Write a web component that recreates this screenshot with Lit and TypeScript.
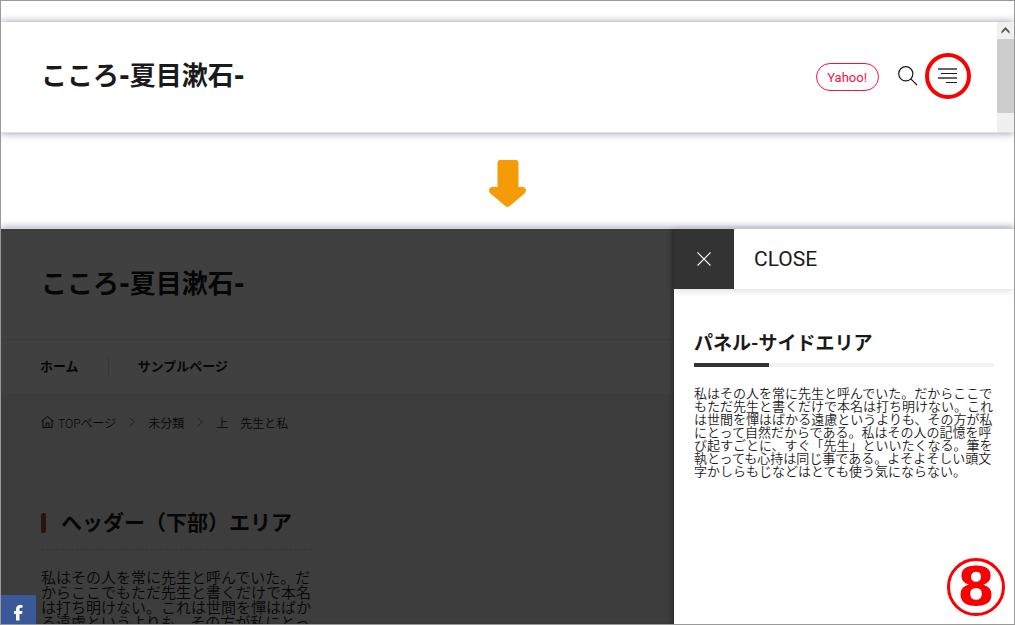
import { LitElement, html, css } from "lit";
import { customElement } from "lit/decorators.js";

const PASSAGE =
  "私はその人を常に先生と呼んでいた。だからここでもただ先生と書くだけで本名は打ち明けない。これは世間を憚はばかる遠慮というよりも、その方が私にとって自然だからである。私はその人の記憶を呼び起すごとに、すぐ「先生」といいたくなる。筆を執とっても心持は同じ事である。よそよそしい頭文字かしらもじなどはとても使う気にならない。";

@customElement("site-header")
class SiteHeader extends LitElement {
  static styles = css`
    :host {
      display: flex;
      flex: none;
      position: relative;
      height: 110px;
      background: #fff;
      border-bottom: 1px solid #dfdfe4;
      box-shadow: 0 0 8px #9494b0;
    }
    .bar {
      flex: 1;
      display: flex;
      align-items: center;
      padding: 0 39px 2px 40px;
    }
    .title {
      flex: 1;
      margin: 0;
      font-family: "DejaVu Sans", "Noto Sans CJK JP", sans-serif;
      font-size: 26px;
      line-height: 40px;
      font-weight: 700;
      color: #1a1a1a;
    }
    .actions {
      display: flex;
      align-items: center;
      gap: 19px;
    }
    .pill {
      box-sizing: border-box;
      height: 28px;
      margin-top: 2px;
      padding: 0 11px 0 10px;
      border: 1px solid #f7133f;
      border-radius: 14px;
      font-size: 13px;
      line-height: 27px;
      color: #f7133f;
      text-decoration: none;
    }
    .icon {
      display: flex;
      position: relative;
      padding: 0;
      border: 0;
      background: none;
      color: #1a1a1a;
    }
    .ring {
      position: absolute;
      inset: -13px;
      border: 4px solid #fa0000;
      border-radius: 50%;
      pointer-events: none;
    }
    .scroll {
      width: 17px;
      background: #f0f0f0;
    }
    .arrow {
      display: block;
    }
    .thumb {
      height: 74px;
      background: #cdcdcd;
    }
  `;

  render() {
    return html`
      <div class="bar">
        <h1 class="title">こころ-夏目漱石-</h1>
        <div class="actions">
          <a class="pill" href="#">Yahoo!</a>
          <button class="icon" aria-label="検索">
            <svg width="21" height="20" viewBox="0 0 21 20" fill="none" stroke="currentColor" stroke-width="1.2">
              <circle cx="7.800" cy="7.800" r="7.100" />
              <path d="M12.800 12.800 19 19" />
            </svg>
          </button>
          <button class="icon" aria-label="メニュー">
            <svg width="20" height="20" viewBox="0 0 20 20">
              <path fill="#666" d="M0 2h19v2H0zM0 11h19v2H0z" />
              <path fill="#1a1a1a" d="M3 7h16v1H3zM8 16h11v1H8z" />
            </svg>
            <span class="ring"></span>
          </button>
        </div>
      </div>
      <div class="scroll" aria-hidden="true">
        <svg class="arrow" width="17" height="17" viewBox="0 0 17 17">
          <path fill="#555" d="M4.500 9.300 8.500 5l4 4.300v2.400l-4-4-4 4z" />
        </svg>
        <div class="thumb"></div>
      </div>
    `;
  }
}

@customElement("site-page")
class SitePage extends LitElement {
  static styles = css`
    :host {
      display: block;
      background: #fff;
      color: #1a1a1a;
    }
    .head {
      height: 110px;
      display: flex;
      align-items: center;
      padding-left: 40px;
      border-bottom: 1px solid #ebebeb;
    }
    .title {
      margin: 0;
      font-family: "DejaVu Sans", "Noto Sans CJK JP", sans-serif;
      font-size: 26px;
      line-height: 40px;
    }
    .nav {
      display: flex;
      align-items: center;
      box-sizing: border-box;
      height: 53px;
      padding: 0 0 2px 39px;
      font-size: 13px;
      font-weight: 700;
    }
    .nav a {
      color: inherit;
      text-decoration: none;
    }
    .nav a + a {
      margin-left: 29px;
      padding-left: 29px;
      border-left: 1px solid #d8d8d8;
    }
    .lower {
      background: #f3f3f3;
      padding: 0 40px;
    }
    .crumbs {
      display: flex;
      align-items: center;
      height: 58px;
      margin: 0;
      padding: 0;
      gap: 13px;
      list-style: none;
      font-size: 12px;
      font-weight: 350;
      color: #1a1a1a;
    }
    .crumbs li,
    .crumbs a {
      display: flex;
      align-items: center;
      gap: 4px;
      color: inherit;
      text-decoration: none;
    }
    .crumbs li {
      gap: 13px;
    }
    .area {
      width: 271px;
      margin-top: 61px;
    }
    .heading {
      display: flex;
      align-items: center;
      gap: 15px;
      margin: 0 0 21px;
      padding-bottom: 15px;
      border-bottom: 1px dashed #ccc;
      font-size: 21px;
      line-height: 22px;
      white-space: nowrap;
    }
    .mark {
      width: 5px;
      height: 20px;
      border-radius: 2px;
      background: #a84a32;
    }
    .text {
      margin: 0;
      font-size: 15px;
      line-height: 15px;
      font-weight: 350;
    }
  `;

  private chevron() {
    return html`<svg width="6" height="10" viewBox="0 0 6 10" fill="none" stroke="#888">
      <path d="M.5.5 5.200 5 .5 9.500" />
    </svg>`;
  }

  render() {
    return html`
      <div class="head"><h2 class="title">こころ-夏目漱石-</h2></div>
      <nav class="nav"><a href="#">ホーム</a><a href="#">サンプルページ</a></nav>
      <div class="lower">
        <ol class="crumbs">
          <li>
            <a href="#">
              <svg width="13" height="12" viewBox="0 0 13 12" fill="none" stroke="currentColor">
                <path d="M.5 5.200 6.500.6l6 4.600M2 4.500v7h9v-7M5 11.500V7h3v4.500" />
              </svg>
              TOPページ
            </a>
            ${this.chevron()}
          </li>
          <li><a href="#">未分類</a>${this.chevron()}</li>
          <li>上　先生と私</li>
        </ol>
        <section class="area">
          <h3 class="heading"><span class="mark"></span>ヘッダー（下部）エリア</h3>
          <p class="text">${PASSAGE}</p>
        </section>
      </div>
    `;
  }
}

@customElement("side-panel")
class SidePanel extends LitElement {
  static styles = css`
    :host {
      display: block;
      background: #fff;
      color: #1a1a1a;
    }
    .top {
      display: flex;
      align-items: center;
      gap: 20px;
      height: 60px;
      font-size: 21px;
      box-shadow: 0 1px 8px rgba(0, 0, 0, 0.16);
    }
    .close {
      display: flex;
      align-items: center;
      justify-content: center;
      width: 60px;
      height: 60px;
      padding: 0;
      border: 0;
      background: #333;
    }
    .body {
      padding: 41px 20px;
    }
    .heading {
      margin: 0;
      padding-bottom: 5px;
      font-size: 19px;
      line-height: 28px;
    }
    .rule {
      height: 4px;
      margin-bottom: 20px;
      background: linear-gradient(90deg, #333 25%, #f3f3f3 25%);
    }
    .text {
      margin: 0;
      font-size: 13px;
      line-height: 13px;
      font-weight: 350;
    }
  `;

  render() {
    return html`
      <div class="top">
        <button class="close" aria-label="閉じる">
          <svg width="14" height="14" viewBox="0 0 14 14" fill="none" stroke="#fff" stroke-width="1.1">
            <path d="M.5.5l13 13M13.500.5l-13 13" />
          </svg>
        </button>
        <span>CLOSE</span>
      </div>
      <div class="body">
        <h3 class="heading">パネル-サイドエリア</h3>
        <div class="rule"></div>
        <p class="text">${PASSAGE}</p>
      </div>
    `;
  }
}

@customElement("app-root")
class AppRoot extends LitElement {
  static styles = css`
    :host {
      display: flex;
      flex-direction: column;
      box-sizing: border-box;
      height: 100vh;
      padding-top: 21px;
      overflow: hidden;
      border: 1px solid #999;
      background: #fff;
      font-family: Roboto, "Noto Sans CJK JP", sans-serif;
    }
    .between {
      display: flex;
      flex: none;
      justify-content: center;
      padding: 27px 0 20px;
    }
    .demo {
      flex: 1;
      min-height: 0;
      display: grid;
      grid-template-columns: minmax(0, 1fr) 340px;
      position: relative;
      box-shadow: 0 0 8px #9494b0;
      border-top: 1px solid #cfd9d8;
    }
    .page {
      position: relative;
      overflow: hidden;
    }
    .shade {
      position: absolute;
      inset: 0;
      background: rgba(0, 0, 0, 0.75);
      box-shadow: inset -4px 0 6px -3px rgba(0, 0, 0, 0.4);
    }
    .share {
      position: absolute;
      left: 0;
      bottom: 0;
      display: flex;
      justify-content: center;
      width: 35px;
      height: 29px;
      background: #3b5998;
    }
    .share svg {
      margin-top: 10px;
    }
    .panel {
      position: relative;
    }
    .number {
      position: absolute;
      right: 9px;
      bottom: 8px;
      box-sizing: border-box;
      width: 58px;
      height: 58px;
      border: 3px solid #fa0000;
      border-radius: 50%;
      color: #fa0000;
      font: 700 54px/52px "DejaVu Sans", sans-serif;
      text-align: center;
    }
  `;

  render() {
    return html`
      <site-header></site-header>
      <div class="between">
        <svg width="38" height="48" viewBox="0 0 38 48" fill="#f59b05" aria-hidden="true">
          <path d="M11.500 0h15q3 0 3 3v24h3.500q4 0 4 3.500 0 1.500-1.500 3L20.500 46.300q-2 1.500-4 0L1.500 33.500Q0 32 0 30.500 0 27 4 27h4.500V3q0-3 3-3z" />
        </svg>
      </div>
      <div class="demo">
        <div class="page">
          <site-page></site-page>
          <div class="shade"></div>
          <a class="share" href="#" aria-label="Facebook">
            <svg width="9" height="16" viewBox="0 0 9 16" fill="#fff">
              <path d="M2 15.500V9H0V6h2V4.500C2 1.500 3.500 0 6 0h2.500v2.800H7C5.800 2.800 5.500 3.300 5.500 4.300V6h3L8 9H5.500v6.500z" />
            </svg>
          </a>
        </div>
        <side-panel class="panel"></side-panel>
        <span class="number">8</span>
      </div>
    `;
  }
}
